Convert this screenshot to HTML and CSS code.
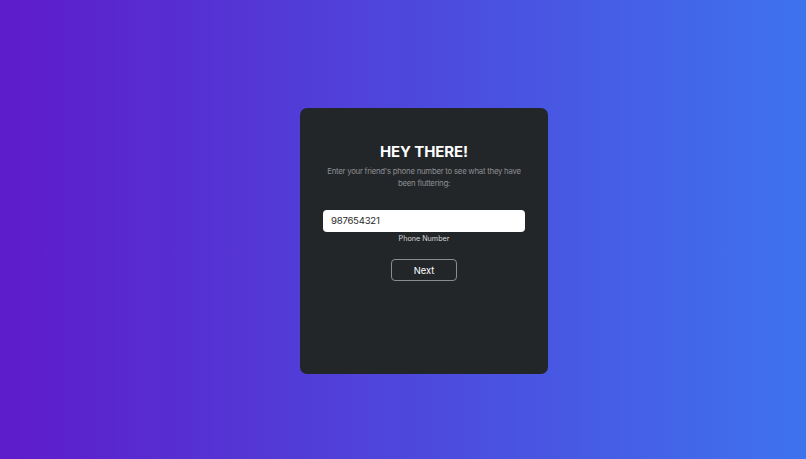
FILE: index.html
```html
<!DOCTYPE html>
<html>
<head>
<meta charset="utf-8">
<link rel="stylesheet" href="styles.css">
</head>
<body>
<main class="page">
  <section class="card">
    <h1 class="title">HEY THERE!</h1>
    <p class="subtitle">Enter your friend's phone number to see what they have been fluttering:</p>
    <div class="field">
      <div class="input">987654321</div>
      <label class="label">Phone Number</label>
    </div>
    <button class="btn">Next</button>
  </section>
</main>
</body>
</html>
```
FILE: styles.css
```css
html, body {
  margin: 0;
  padding: 0;
  height: 100%;
}
body {
  background: linear-gradient(to right, #5e1bca, #3e73ee);
  font-family: Inter, "Noto Sans", sans-serif;
  overflow: hidden;
}
.page {
  padding: 108px 0 0 300px;
}
.card {
  width: 248px;
  height: 266px;
  box-sizing: border-box;
  background: #232629;
  border-radius: 7px;
  padding: 34px 23px 0;
  display: flex;
  flex-direction: column;
  align-items: center;
}
.title {
  margin: 0;
  color: #ffffff;
  font-size: 15px;
  line-height: 20px;
  font-weight: 700;
  letter-spacing: -0.1px;
}
.subtitle {
  margin: 4px 0 0;
  color: #8b8e92;
  font-size: 7.8px;
  line-height: 11.5px;
  letter-spacing: -0.25px;
  text-align: center;
}
.field {
  margin-top: 21px;
  width: 100%;
  display: flex;
  flex-direction: column;
  align-items: center;
}
.input {
  width: 100%;
  box-sizing: border-box;
  height: 22px;
  background: #ffffff;
  border-radius: 4px;
  color: #2a2a2a;
  font-size: 9.6px;
  letter-spacing: -0.25px;
  line-height: 22px;
  padding-left: 8px;
}
.label {
  margin-top: 2px;
  color: #d6d6d6;
  font-size: 7.2px;
  line-height: 10px;
}
.btn {
  margin-top: 15px;
  width: 66px;
  height: 22px;
  background: transparent;
  border: 1px solid #8a8c8f;
  border-radius: 4px;
  color: #ffffff;
  font-family: Inter, "Noto Sans", sans-serif;
  font-size: 9.3px;
  padding: 0;
}
```
